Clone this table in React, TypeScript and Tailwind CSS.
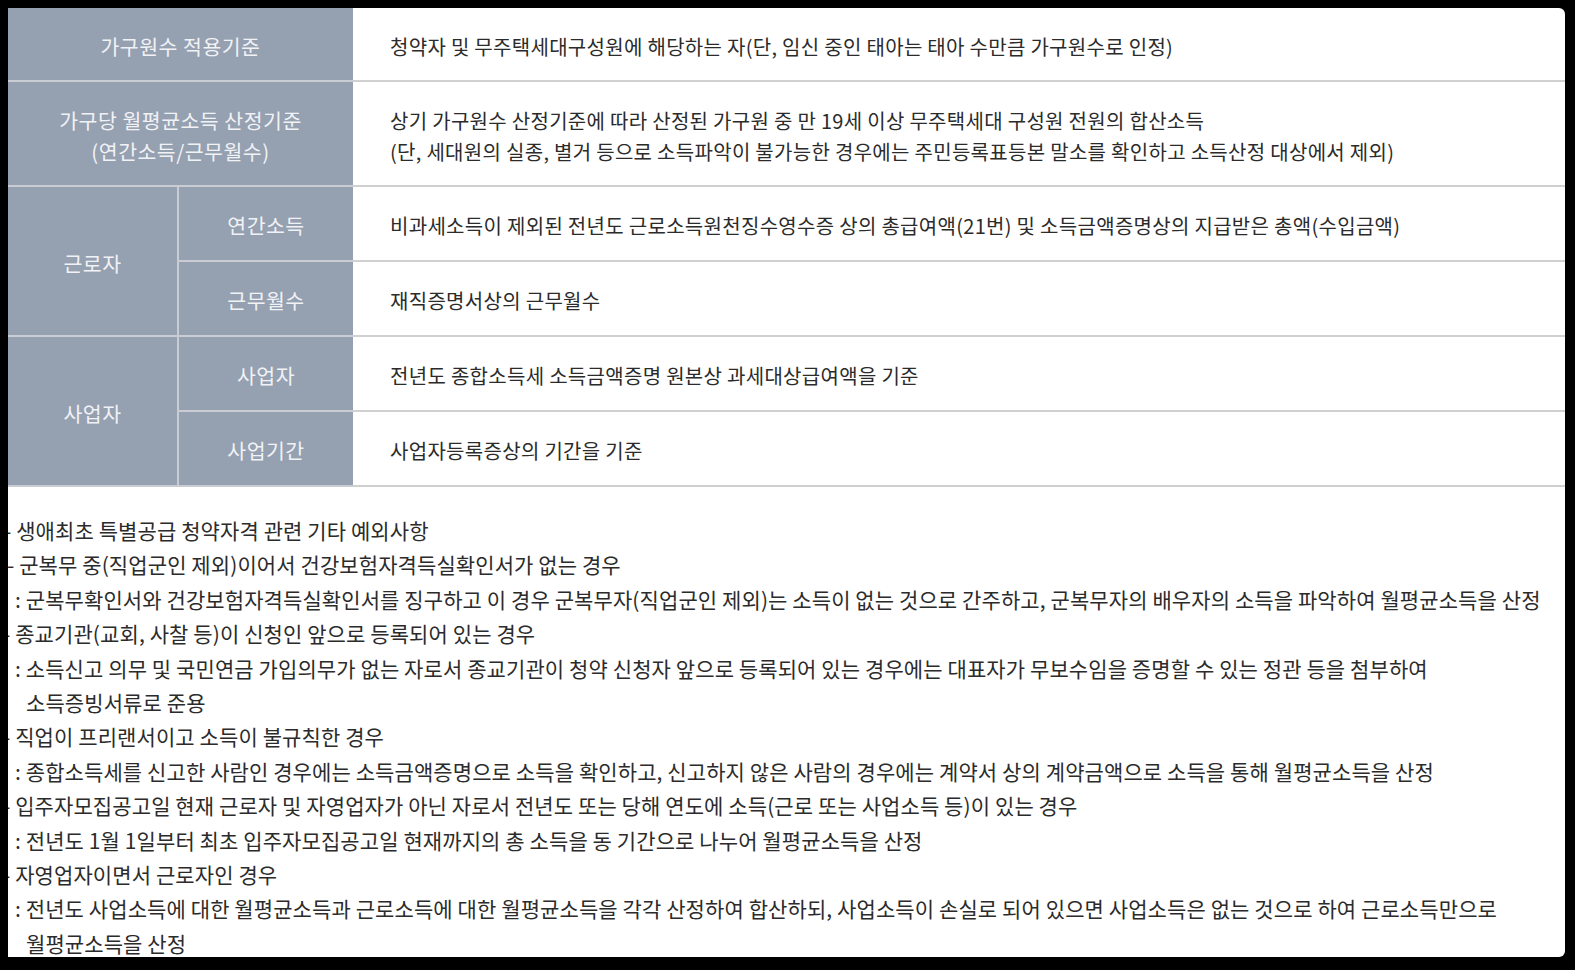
const font = { fontFamily: '"Noto Sans CJK KR", "Noto Sans", sans-serif' };

type Note = { text: string; cls: string };

const notes: Note[] = [
  { text: '- 생애최초 특별공급 청약자격 관련 기타 예외사항', cls: 'ml-[-4px]' },
  { text: '- 군복무 중(직업군인 제외)이어서 건강보험자격득실확인서가 없는 경우', cls: 'ml-[-1px]' },
  { text: ': 군복무확인서와 건강보험자격득실확인서를 징구하고 이 경우 군복무자(직업군인 제외)는 소득이 없는 것으로 간주하고, 군복무자의 배우자의 소득을 파악하여 월평균소득을 산정', cls: 'ml-[7px]' },
  { text: '- 종교기관(교회, 사찰 등)이 신청인 앞으로 등록되어 있는 경우', cls: 'ml-[-5px]' },
  { text: ': 소득신고 의무 및 국민연금 가입의무가 없는 자로서 종교기관이 청약 신청자 앞으로 등록되어 있는 경우에는 대표자가 무보수임을 증명할 수 있는 정관 등을 첨부하여', cls: 'ml-[7px]' },
  { text: '소득증빙서류로 준용', cls: 'ml-[18px]' },
  { text: '- 직업이 프리랜서이고 소득이 불규칙한 경우', cls: 'ml-[-5px]' },
  { text: ': 종합소득세를 신고한 사람인 경우에는 소득금액증명으로 소득을 확인하고, 신고하지 않은 사람의 경우에는 계약서 상의 계약금액으로 소득을 통해 월평균소득을 산정', cls: 'ml-[7px]' },
  { text: '- 입주자모집공고일 현재 근로자 및 자영업자가 아닌 자로서 전년도 또는 당해 연도에 소득(근로 또는 사업소득 등)이 있는 경우', cls: 'ml-[-5px]' },
  { text: ': 전년도 1월 1일부터 최초 입주자모집공고일 현재까지의 총 소득을 동 기간으로 나누어 월평균소득을 산정', cls: 'ml-[7px]' },
  { text: '- 자영업자이면서 근로자인 경우', cls: 'ml-[-5px]' },
  { text: ': 전년도 사업소득에 대한 월평균소득과 근로소득에 대한 월평균소득을 각각 산정하여 합산하되, 사업소득이 손실로 되어 있으면 사업소득은 없는 것으로 하여 근로소득만으로', cls: 'ml-[7px]' },
  { text: '월평균소득을 산정', cls: 'ml-[18px]' },
];

function Head({ children, className = '' }: { children: React.ReactNode; className?: string }) {
  return (
    <div
      className={`flex flex-col items-center justify-center border-b-2 border-[#c9ccd2] bg-[#95a0b1] pt-[4px] text-center text-[20.5px] leading-[31px] tracking-[0.5px] text-[#f1f2f5] ${className}`}
    >
      {children}
    </div>
  );
}

function Body({ children }: { children: React.ReactNode }) {
  return (
    <div className="flex flex-col justify-center border-b-2 border-[#d0d0d0] pl-[37px] pt-[4px] text-[20px] leading-[31px] tracking-[0.3px] text-[#2b2b2b]">
      {children}
    </div>
  );
}

export default function App() {
  return (
    <div className="h-[970px] w-[1575px] bg-black pl-[8px] pt-[8px]" style={font}>
      <div className="h-[949px] w-[1557px] overflow-hidden rounded-r-[6px] bg-white">
        <div className="grid grid-cols-[171px_174px_1fr] grid-rows-[74px_105px_75px_75px_75px_75px]">
          <Head className="col-span-2">가구원수 적용기준</Head>
          <Body>청약자 및 무주택세대구성원에 해당하는 자(단, 임신 중인 태아는 태아 수만큼 가구원수로 인정)</Body>

          <Head className="col-span-2">
            <span>가구당 월평균소득 산정기준</span>
            <span>(연간소득/근무월수)</span>
          </Head>
          <Body>
            <span>상기 가구원수 산정기준에 따라 산정된 가구원 중 만 19세 이상 무주택세대 구성원 전원의 합산소득</span>
            <span>(단, 세대원의 실종, 별거 등으로 소득파악이 불가능한 경우에는 주민등록표등본 말소를 확인하고 소득산정 대상에서 제외)</span>
          </Body>

          <Head className="row-span-2 border-r-2">근로자</Head>
          <Head>연간소득</Head>
          <Body>비과세소득이 제외된 전년도 근로소득원천징수영수증 상의 총급여액(21번) 및 소득금액증명상의 지급받은 총액(수입금액)</Body>
          <Head>근무월수</Head>
          <Body>재직증명서상의 근무월수</Body>

          <Head className="row-span-2 border-r-2">사업자</Head>
          <Head>사업자</Head>
          <Body>전년도 종합소득세 소득금액증명 원본상 과세대상급여액을 기준</Body>
          <Head>사업기간</Head>
          <Body>사업자등록증상의 기간을 기준</Body>
        </div>

        <div className="pt-[26px] text-[21px] leading-[34.4px] tracking-[0.1px] text-[#2b2b2b]">
          {notes.map((n, i) => (
            <div key={i} className={`whitespace-nowrap ${n.cls}`}>
              {n.text}
            </div>
          ))}
        </div>
      </div>
    </div>
  );
}
